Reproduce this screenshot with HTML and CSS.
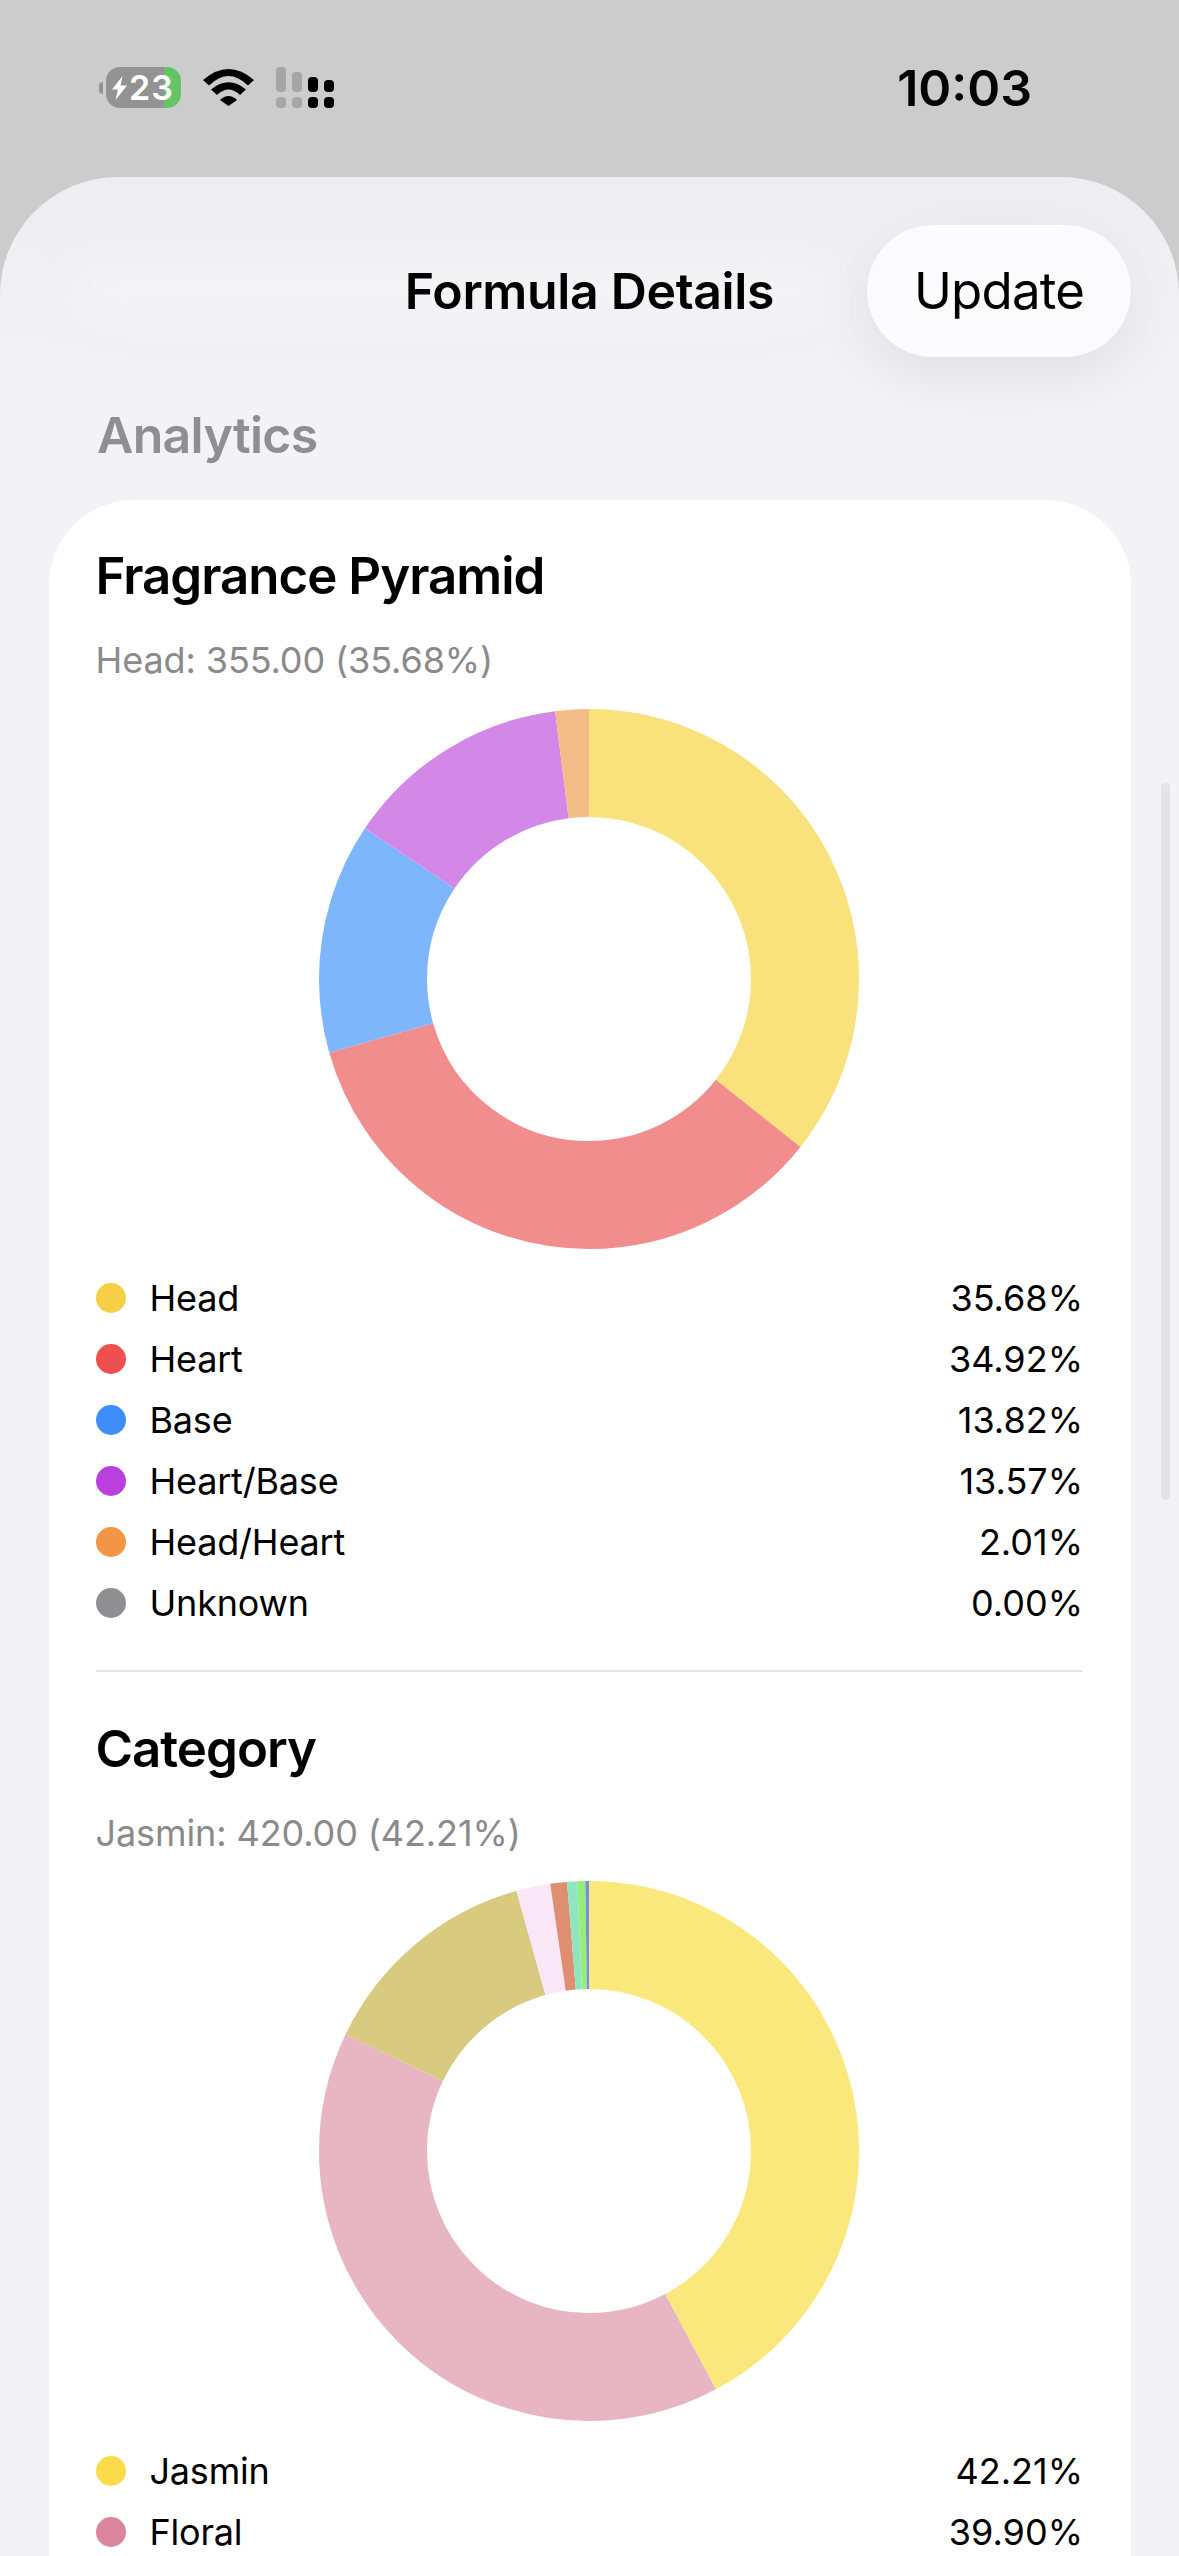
FILE: index.html
```html
<!DOCTYPE html>
<html lang="en">
<head>
<meta charset="utf-8">
<title>Formula Details</title>
<link rel="stylesheet" href="styles.css">
</head>
<body>
<div class="screen">
  <header class="status">
    <div class="status-icons">
      <div class="battery">
        <span class="battery-nub"></span>
        <div class="battery-body">
          <svg class="bolt" viewBox="0 0 15 24"><path d="M10.5 0 0 13.5h6L3.5 24 15 9.5H8.5z"/></svg>
          <span class="battery-level">23</span>
        </div>
      </div>
      <svg class="wifi" viewBox="0 0 51 37">
        <path d="M0 11Q25.500-11 51 11L45 16.500Q25.500-2.500 6 16.500Z"/>
        <path d="M8 20.500Q25.500 6 43 20.500L37 26Q25.500 15 14 26Z"/>
        <path d="M17 31Q25.500 23 34 31L25.500 37Z"/>
      </svg>
      <svg class="cell" viewBox="0 0 58 41">
        <g class="cell-off">
          <rect x="0" y="0" width="10" height="25" rx="4"/>
          <rect x="16" y="5" width="10" height="20" rx="4"/>
          <rect x="0" y="30" width="10" height="11" rx="4"/>
          <rect x="16" y="30" width="10" height="11" rx="4"/>
        </g>
        <rect x="32" y="10" width="10" height="15" rx="4"/>
        <rect x="48" y="13" width="10" height="12" rx="4"/>
        <rect x="32" y="30" width="10" height="11" rx="4"/>
        <rect x="48" y="30" width="10" height="11" rx="4"/>
      </svg>
    </div>
    <time class="clock">10:03</time>
  </header>

  <main class="sheet">
    <span class="scrollbar"></span>
    <nav class="nav">
      <span class="nav-glow"></span>
      <h1 class="nav-title">Formula Details</h1>
      <button class="nav-action" type="button">Update</button>
    </nav>

    <h2 class="section-label">Analytics</h2>

    <section class="card">
      <article class="chart">
        <h3 class="chart-title">Fragrance Pyramid</h3>
        <p class="chart-sub">Head: 355.00 (35.68%)</p>
        <svg class="donut" viewBox="0 0 540 540">
          <g transform="rotate(-90 270 270)" fill="none" stroke-width="108">
            <circle class="s-head" cx="270" cy="270" r="216" pathLength="100" stroke-dasharray="35.68 64.32" stroke-dashoffset="0"/>
            <circle class="s-heart" cx="270" cy="270" r="216" pathLength="100" stroke-dasharray="34.92 65.08" stroke-dashoffset="-35.68"/>
            <circle class="s-base" cx="270" cy="270" r="216" pathLength="100" stroke-dasharray="13.82 86.18" stroke-dashoffset="-70.6"/>
            <circle class="s-hb" cx="270" cy="270" r="216" pathLength="100" stroke-dasharray="13.57 86.43" stroke-dashoffset="-84.42"/>
            <circle class="s-hh" cx="270" cy="270" r="216" pathLength="100" stroke-dasharray="2.01 97.99" stroke-dashoffset="-97.99"/>
          </g>
        </svg>
        <ul class="legend">
          <li class="legend-row"><span class="dot d-head"></span><span class="legend-name">Head</span><span class="legend-value">35.68%</span></li>
          <li class="legend-row"><span class="dot d-heart"></span><span class="legend-name">Heart</span><span class="legend-value">34.92%</span></li>
          <li class="legend-row"><span class="dot d-base"></span><span class="legend-name">Base</span><span class="legend-value">13.82%</span></li>
          <li class="legend-row"><span class="dot d-hb"></span><span class="legend-name">Heart/Base</span><span class="legend-value">13.57%</span></li>
          <li class="legend-row"><span class="dot d-hh"></span><span class="legend-name">Head/Heart</span><span class="legend-value">2.01%</span></li>
          <li class="legend-row"><span class="dot d-unknown"></span><span class="legend-name">Unknown</span><span class="legend-value">0.00%</span></li>
        </ul>
      </article>

      <hr class="divider">

      <article class="chart">
        <h3 class="chart-title">Category</h3>
        <p class="chart-sub">Jasmin: 420.00 (42.21%)</p>
        <svg class="donut" viewBox="0 0 540 540">
          <g transform="rotate(-90 270 270)" fill="none" stroke-width="108">
            <circle class="s-jasmin" cx="270" cy="270" r="216" pathLength="100" stroke-dasharray="42.21 57.79" stroke-dashoffset="0"/>
            <circle class="s-floral" cx="270" cy="270" r="216" pathLength="100" stroke-dasharray="39.9 60.1" stroke-dashoffset="-42.21"/>
            <circle class="s-olive" cx="270" cy="270" r="216" pathLength="100" stroke-dasharray="13.56 86.44" stroke-dashoffset="-82.11"/>
            <circle class="s-blush" cx="270" cy="270" r="216" pathLength="100" stroke-dasharray="2.03 97.97" stroke-dashoffset="-95.67"/>
            <circle class="s-salmon" cx="270" cy="270" r="216" pathLength="100" stroke-dasharray="1 99" stroke-dashoffset="-97.7"/>
            <circle class="s-teal" cx="270" cy="270" r="216" pathLength="100" stroke-dasharray="0.6 99.4" stroke-dashoffset="-98.7"/>
            <circle class="s-green" cx="270" cy="270" r="216" pathLength="100" stroke-dasharray="0.48 99.52" stroke-dashoffset="-99.3"/>
            <circle class="s-indigo" cx="270" cy="270" r="216" pathLength="100" stroke-dasharray="0.22 99.78" stroke-dashoffset="-99.78"/>
          </g>
        </svg>
        <ul class="legend">
          <li class="legend-row"><span class="dot d-jasmin"></span><span class="legend-name">Jasmin</span><span class="legend-value">42.21%</span></li>
          <li class="legend-row"><span class="dot d-floral"></span><span class="legend-name">Floral</span><span class="legend-value">39.90%</span></li>
        </ul>
      </article>
    </section>
  </main>
</div>
</body>
</html>
```

FILE: styles.css
```css
* { box-sizing: border-box; }

html, body {
  margin: 0;
  padding: 0;
  height: 2556px;
  overflow: hidden;
}

body {
  background: #cccccc;
  color: #000;
  font-family: Inter, "Noto Sans", "Liberation Sans", sans-serif;
}

.screen {
  height: 2556px;
  overflow: hidden;
  display: flex;
  flex-direction: column;
}

/* Status bar */
.status {
  height: 177px;
  flex: none;
  display: flex;
  align-items: center;
  justify-content: space-between;
  padding: 0 147px 2px 99px;
}

.status-icons {
  display: flex;
  align-items: center;
  gap: 22px;
}

.battery {
  display: flex;
  align-items: center;
  gap: 3px;
}

.battery-nub {
  width: 4px;
  height: 12px;
  border-radius: 6px 0 0 6px;
  background: #939393;
}

.battery-body {
  width: 75px;
  height: 41px;
  border-radius: 14px;
  background: linear-gradient(90deg, #939393 0, #939393 58px, #65c466 58px);
  display: flex;
  align-items: center;
  padding-left: 6px;
  gap: 2px;
  color: #fff;
}

.bolt {
  width: 15px;
  height: 24px;
  fill: #fff;
  flex: none;
}

.battery-level {
  font-size: 34px;
  font-weight: 600;
  line-height: 41px;
  letter-spacing: 1px;
}

.wifi {
  width: 51px;
  height: 37px;
  fill: #000;
}

.cell {
  width: 58px;
  height: 41px;
  fill: #000;
}

.cell-off {
  fill: #a6a6a6;
}

.clock {
  font-size: 50px;
  font-weight: 600;
  line-height: 50px;
}

/* Sheet */
.sheet {
  position: relative;
  flex: 1;
  min-height: 0;
  background: linear-gradient(180deg, #eeeef2 0, #f2f2f7 230px);
  border-radius: 118px 118px 0 0;
  overflow: hidden;
}

.scrollbar {
  position: absolute;
  top: 606px;
  right: 9px;
  width: 9px;
  height: 717px;
  border-radius: 5px;
  background: #e3e3e8;
  z-index: 2;
}

.nav {
  position: relative;
  display: grid;
  grid-template-columns: 1fr auto 1fr;
  align-items: center;
  padding: 48px 48px 0;
}

.nav-glow {
  position: absolute;
  left: 70px;
  top: 92px;
  width: 760px;
  height: 44px;
  border-radius: 40px;
  background: #f5f5f8;
  filter: blur(22px);
}

.nav-title {
  grid-column: 2;
  position: relative;
  margin: 0;
  font-size: 50px;
  font-weight: 600;
  line-height: 60px;
  letter-spacing: -0.35px;
}

.nav-action {
  grid-column: 3;
  justify-self: end;
  position: relative;
  width: 264px;
  height: 132px;
  border: 0;
  border-radius: 66px;
  background: #fbfbfd;
  color: #000;
  font: 400 51px/60px Inter, "Noto Sans", sans-serif;
  letter-spacing: -0.8px;
  padding: 0;
  box-shadow: 0 20px 60px rgba(0, 0, 0, 0.07);
}

.section-label {
  margin: 48px 0 35px 97px;
  font-size: 50px;
  font-weight: 600;
  line-height: 60px;
  letter-spacing: -0.7px;
  color: #8e8e93;
}

/* Card */
.card {
  margin: 0 48px 0 49px;
  padding: 46px 48px 0 46.5px;
  background: #fff;
  border-radius: 85px 85px 0 0;
}

.chart-title {
  margin: 0;
  font-size: 51px;
  font-weight: 600;
  line-height: 60px;
  letter-spacing: -1px;
}

.chart-sub {
  margin: 32px 0 0;
  font-size: 36px;
  font-weight: 400;
  line-height: 44px;
  letter-spacing: -0.1px;
  color: #8a8a8a;
}

.donut {
  display: block;
  width: 540px;
  height: 540px;
  margin: 26.5px auto 0;
}

.legend {
  list-style: none;
  margin: 19px 0 0;
  padding: 0;
}

.legend-row {
  height: 61px;
  display: flex;
  align-items: center;
  gap: 24px;
  font-size: 36px;
  line-height: 44px;
}

.legend-name {
  flex: 1;
  letter-spacing: -0.2px;
}

.dot {
  width: 30px;
  height: 30px;
  border-radius: 50%;
  flex: none;
}

.divider {
  margin: 36px 0 47px;
  height: 2px;
  border: 0;
  background: #e5e5e7;
}

.d-head { background: #f7cf47; }
.d-heart { background: #ee4f4f; }
.d-base { background: #3f8cfb; }
.d-hb { background: #bb3fdc; }
.d-hh { background: #f29544; }
.d-unknown { background: #8e8e93; }
.d-jasmin { background: #fbdb4a; }
.d-floral { background: #db869d; }

.s-head { stroke: #f9e17b; }
.s-heart { stroke: #f28d8d; }
.s-base { stroke: #7db6fb; }
.s-hb { stroke: #d388e8; }
.s-hh { stroke: #f4bd88; }
.s-jasmin { stroke: #fbe87d; }
.s-floral { stroke: #e8b6c3; }
.s-olive { stroke: #d8cb80; }
.s-blush { stroke: #f9e7f7; }
.s-salmon { stroke: #de8f71; }
.s-teal { stroke: #90e4c0; }
.s-green { stroke: #93ef77; }
.s-indigo { stroke: #7a8ee0; }
```
